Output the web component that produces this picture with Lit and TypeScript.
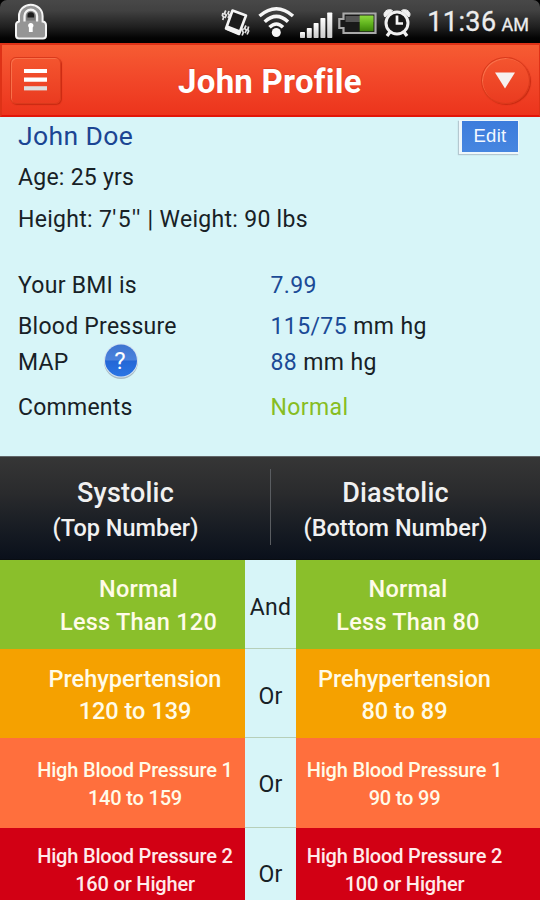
import { LitElement, html, css } from "lit";
import { customElement } from "lit/decorators.js";

interface Range {
  kind: string;
  join: string;
  left: [string, string];
  right: [string, string];
}

const RANGES: Range[] = [
  { kind: "normal", join: "And", left: ["Normal", "Less Than 120"], right: ["Normal", "Less Than 80"] },
  { kind: "pre", join: "Or", left: ["Prehypertension", "120 to 139"], right: ["Prehypertension", "80 to 89"] },
  { kind: "high1", join: "Or", left: ["High Blood Pressure 1", "140 to 159"], right: ["High Blood Pressure 1", "90 to 99"] },
  { kind: "high2", join: "Or", left: ["High Blood Pressure 2", "160 or Higher"], right: ["High Blood Pressure 2", "100 or Higher"] },
];

@customElement("status-bar")
class StatusBar extends LitElement {
  static styles = css`
    :host { display: block; height: 43px; background: #000; }
    .bar {
      height: 43px; box-sizing: border-box; display: flex; align-items: center; padding: 0 11px 0 14px;
      background: linear-gradient(#484848 0, #414141 25%, #202020 62%, #040404 88%, #000 100%);
      border-radius: 7px 7px 0 0;
    }
    svg { display: block; flex: none; }
    .icons { margin-left: 173px; }
    .time { margin-left: auto; color: #ededed; font-size: 27px; line-height: 41px; letter-spacing: 0.4px; white-space: nowrap; padding-top: 4px; -webkit-text-stroke: 0.3px #ededed; }
    .am { font-size: 18px; letter-spacing: 0; margin-left: 5px; }
  `;
  render() {
    return html`<div class="bar">
      <svg width="34" height="43" viewBox="14 0 34 43">
        <path d="M19 21.500V16a11.800 11.300 0 0 1 23.600 0v5.500a3.500 3.500 0 0 1 3.400 3.500v10.500a3 3 0 0 1-3 3H19a3 3 0 0 1-3-3V25a3.500 3.500 0 0 1 3-3.500z" fill="#959595" stroke="#f4f4f4" stroke-width="2"/>
        <path d="M24.500 21.500V16a6.300 6.300 0 0 1 12.600 0v5.500" fill="none" stroke="#f4f4f4" stroke-width="2.200"/>
        <path d="M26.300 20.500V16a4.500 4.500 0 0 1 9 0v4.500z" fill="#777"/>
        <path d="M27.500 17.500v-2a3.300 3.300 0 0 1 6.600 0v2z" fill="#1c1c1c"/>
        <path d="M28.200 26a2.700 2.400 0 1 1 5.200 0c0 .6-.3 1-.7 1.400V32h-3.800v-4.600c-.4-.4-.7-.8-.7-1.400z" fill="#fff"/>
      </svg>
      <svg class="icons" width="194" height="43" viewBox="221 0 194 43">
        <defs>
          <linearGradient id="g" x1="0" y1="0" x2="0" y2="1"><stop offset="0" stop-color="#8ed93e"/><stop offset=".5" stop-color="#62b51f"/><stop offset="1" stop-color="#3c8508"/></linearGradient>
          <linearGradient id="s" x1="0" y1="0" x2="0" y2="1"><stop offset="0" stop-color="#fff"/><stop offset="1" stop-color="#c9c9c9"/></linearGradient>
        </defs>
        <path d="M232.500 10.500l13.500 5-7 18.500-13-5.500z" fill="#1c1c1c" stroke="#f4f4f4" stroke-width="2.600" stroke-linejoin="round"/>
        <path d="M226.500 27.300l12.800 5" stroke="#f4f4f4" stroke-width="4.500"/>
        <path d="M225.800 10.500l-1.500 3 2 1.500-1.500 3M222.900 13l-.5 2.500 1.200 1.500-.8 3M229 11l-1 2.500 1.500 1.500-1.500 3M246 25.500l-1.500 3 2 1.500-1.500 3M248.600 26.500l-.8 3 .8 1.500-1.500 3.500M243.300 28.500l-1 2 1 2-1.200 3" fill="none" stroke="#e4e4e4" stroke-width="1.700"/>
        <g fill="none" stroke="#f6f6f6" stroke-width="3.500">
          <path d="M259.500 16Q276.500 1.500 293 16"/>
          <path d="M264.700 21.800Q276.500 11 288 21.800"/>
          <path d="M269.500 27.300Q276.500 20.500 283 27.300"/>
        </g>
        <circle cx="276.300" cy="32.500" r="4.500" fill="#f6f6f6"/>
        <g fill="url(#s)">
          <rect x="300" y="32" width="5" height="6" rx=".7"/><rect x="306.800" y="28" width="5" height="10" rx=".7"/>
          <rect x="313.600" y="23" width="5" height="15" rx=".7"/><rect x="320.400" y="18" width="5" height="20" rx=".7"/>
          <rect x="327.200" y="12.500" width="5.100" height="25.500" rx=".7"/>
        </g>
        <path d="M343.500 13.500H375.500V33H343.500V28H339.300V19H343.500z" fill="#191919" stroke="#a9a9a9" stroke-width="2.200"/>
        <rect x="345.500" y="16" width="28" height="6" fill="#555"/>
        <rect x="359.700" y="15.500" width="13.800" height="15.800" fill="url(#g)"/>
        <circle cx="397" cy="23" r="11" fill="#171717" stroke="#f0f0f0" stroke-width="3"/>
        <path d="M397 15.500V23.500h6" fill="none" stroke="#f5f5f5" stroke-width="2.700"/>
        <path d="M385 17c-3.500-4 2.500-9.500 7.500-6.500zM409 17c3.500-4-2.500-9.500-7.500-6.500z" fill="#f0f0f0" stroke="#f0f0f0" stroke-width="1"/>
        <path d="M390 32l-3 4M404 32l3 4" stroke="#f0f0f0" stroke-width="3.300"/>
      </svg>
      <div class="time">11:36<span class="am">AM</span></div>
    </div>`;
  }
}

@customElement("title-bar")
class TitleBar extends LitElement {
  static styles = css`
    :host {
      display: flex; box-sizing: border-box; height: 74px; padding: 0 9px 0 8px; align-items: center; justify-content: space-between;
      background: linear-gradient(#f65c33 0, #f2492a 45%, #ec341c 100%);
      border: 2px solid #de3217; border-width: 2px 1px 2px 2px; border-bottom-color: #e21508;
    }
    .btn {
      box-sizing: border-box; display: flex; align-items: center; justify-content: center; width: 51px; height: 47px;
      border: 1px solid #d93a1c; border-radius: 6px;
      background: linear-gradient(#f4552f, #ea3b20);
      box-shadow: inset 1px 1px 0 #f9704a, 1px 1px 1px #c92a12;
    }
    .round { width: 49px; border-radius: 50%; }
    .title { color: #fff; font-weight: 700; font-size: 33px; line-height: 44px; letter-spacing: 0.25px; text-shadow: 0 -1px 1px #b9301b66; padding: 4px 2px 0 0; }
  `;
  render() {
    return html`
      <div class="btn"><svg width="24" height="24" viewBox="0 0 24 24"><path d="M0 3h23M0 11.700h23" stroke="#fff" stroke-width="4.200"/><path d="M0 20.300h23" stroke="#ddd" stroke-width="4.200"/></svg></div>
      <div class="title">John Profile</div>
      <div class="btn round"><svg width="20" height="18" viewBox="0 0 20 18"><path d="M0 1.500h20L10 17.500z" fill="#f6f1ef"/></svg></div>`;
  }
}

@customElement("profile-panel")
class ProfilePanel extends LitElement {
  static styles = css`
    :host { display: block; box-sizing: border-box; height: 339px; padding: 0 0 0 18px; background: #d7f5f8; color: #172126; font-size: 23px; letter-spacing: 0.25px; }
    .row { display: grid; grid-template-columns: 252px 1fr; align-items: center; height: 41px; white-space: nowrap; }
    .top { display: flex; justify-content: space-between; height: 40px; padding-right: 21px; }
    .name { font-size: 26.500px; letter-spacing: 0.4px; color: #1b4593; margin-top: -3px; }
    .edit {
      align-self: flex-start; box-sizing: border-box; margin-top: 3px; width: 60px; height: 34px; border: 1px solid #eef7fb; border-width: 1px 1px 2px 3px; text-align: center;
      font: 18.500px/29px "Liberation Sans", sans-serif; letter-spacing: 0.3px; color: #f3f8ff;
      background: linear-gradient(#3d7cdc, #4686e0); box-shadow: -1px 1px 1px #b4c8d0;
    }
    .height { height: 42px; margin-bottom: 25px; letter-spacing: 0.3px; }
    .inches { letter-spacing: 1.4px; }
    .map { height: 31px; }
    .comments { height: 59px; }
    .label { display: flex; align-items: center; height: 31px; }
    .help { display: block; margin: -5px 0 -2px 34px; }
    .value { letter-spacing: 0.4px; padding-left: 0.500px; }
    .num { color: #1b4a96; }
    .good { color: #87bd22; }
    .q { font: 24px Roboto, sans-serif; fill: #fff; }
  `;
  render() {
    return html`
      <div class="row top"><span class="name">John Doe</span><span class="edit">Edit</span></div>
      <div class="row">Age: 25 yrs</div>
      <div class="row height"><span>Height: 7<span class="inches">'5''</span> | Weight: 90 lbs</span></div>
      <div class="row"><span>Your BMI is</span><span class="value num">7.99</span></div>
      <div class="row"><span>Blood Pressure</span><span class="value"><span class="num">115/75</span> mm hg</span></div>
      <div class="row map">
        <span class="label">MAP
          <svg class="help" width="36" height="38" viewBox="0 0 36 38">
            <defs><linearGradient id="b" x1="0" y1="0" x2="0" y2="1"><stop offset="0" stop-color="#3e74d0"/><stop offset=".48" stop-color="#4b82dc"/><stop offset=".52" stop-color="#2467d6"/><stop offset="1" stop-color="#2a75e4"/></linearGradient></defs>
            <circle cx="18" cy="20" r="17" fill="#a9bcc4"/><circle cx="18" cy="18.500" r="17" fill="#d5e4f2"/><circle cx="18" cy="18.500" r="16" fill="url(#b)"/>
            <text class="q" x="17" y="27" text-anchor="middle">?</text>
          </svg>
        </span>
        <span class="value"><span class="num">88</span> mm hg</span>
      </div>
      <div class="row comments"><span>Comments</span><span class="value good">Normal</span></div>`;
  }
}

@customElement("pressure-table")
class PressureTable extends LitElement {
  static styles = css`
    :host { display: block; font-weight: 500; text-align: center; white-space: nowrap; }
    .head {
      display: grid; grid-template-columns: 270px 1px 269px; box-sizing: border-box; height: 104px; color: #f1f1f1;
      background: linear-gradient(#363636 0, #2a2b2d 35%, #151a22 75%, #0a101b 100%);
      border-top: 1px solid #626669; border-bottom: 1px solid #090d12;
    }
    .col { padding-top: 19px; }
    .col:first-child { padding-right: 19px; }
    .col:last-child { padding-right: 20px; }
    .big { font-size: 27px; line-height: 35px; letter-spacing: 0.2px; }
    .small { font-size: 23.500px; line-height: 34px; }
    .rule { background: #5a5d61; margin: 12px 0 14px; }
    .range { display: grid; grid-template-columns: 245px 51px 244px; height: 89px; font-size: 23.500px; line-height: 33px; letter-spacing: 0.25px; color: #fffbe8; }
    .cell { box-sizing: border-box; padding-top: 13px; }
    .cell:first-child { padding-left: 32px; }
    .cell:last-child { padding-right: 20px; }
    .join { box-sizing: border-box; font-weight: 400; font-size: 23px; color: #172126; background: #d7f5f8; line-height: 88px; padding-top: 4px; border-bottom: 1px solid #b6cfb9; overflow: hidden; }
    .pre .cell { background: #f5a100; padding-top: 13.500px; line-height: 32px; letter-spacing: 0; }
    .normal .cell { background: #8abf2b; }
    .high1 .cell, .high2 .cell { font-size: 20px; line-height: 28px; letter-spacing: -0.180px; }
    .high1 { height: 90px; }
    .high1 .cell { background: #ff6f3d; padding-top: 18px; }
    .high1 .join, .high2 .join { padding-top: 3px; }
    .high2 .cell { background: #d20014; padding-top: 14px; color: #ffeaea; }
    .pre .cell:first-child, .high1 .cell:first-child, .high2 .cell:first-child { padding-left: 25px; }
    .pre .cell:last-child, .high1 .cell:last-child, .high2 .cell:last-child { padding-right: 27px; }
  `;
  render() {
    return html`
      <div class="head">
        <div class="col"><div class="big">Systolic</div><div class="small">(Top Number)</div></div>
        <div class="rule"></div>
        <div class="col"><div class="big">Diastolic</div><div class="small">(Bottom Number)</div></div>
      </div>
      ${RANGES.map((r) => html`<div class="range ${r.kind}">
        <div class="cell">${r.left.map((t) => html`<div>${t}</div>`)}</div>
        <div class="join">${r.join}</div>
        <div class="cell">${r.right.map((t) => html`<div>${t}</div>`)}</div>
      </div>`)}`;
  }
}

@customElement("app-root")
class AppRoot extends LitElement {
  static styles = css`
    :host { display: block; width: 540px; height: 900px; overflow: hidden; background: #d7f5f8; font-family: Roboto, "Liberation Sans", sans-serif; }
  `;
  render() {
    return html`<status-bar></status-bar><title-bar></title-bar><profile-panel></profile-panel><pressure-table></pressure-table>`;
  }
}
